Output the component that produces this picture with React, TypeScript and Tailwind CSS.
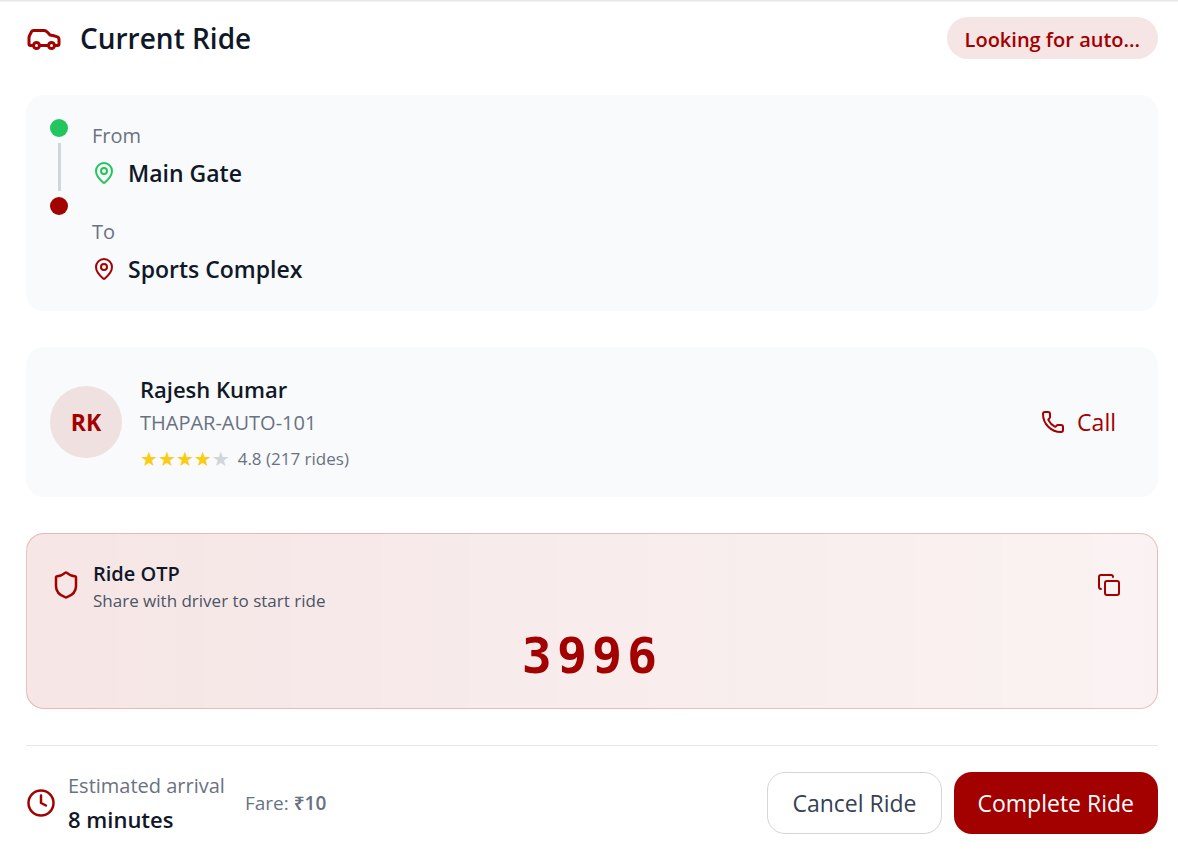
import { Car, Clock, Copy, MapPin, Phone, Shield } from "lucide-react"
import clsx from "clsx"

const ride = {
    status: "Looking for auto...",
    from: "Main Gate",
    to: "Sports Complex",
    otp: "3996",
    eta: "8 minutes",
    fare: 10,
    driver: {
        name: "Rajesh Kumar",
        initials: "RK",
        vehicle: "THAPAR-AUTO-101",
        rating: 4.8,
        rides: 217,
    },
}

function Stop({ label, place, color }: { label: string; place: string; color: string }) {
    return (
        <div>
            <p className="text-[20px] leading-[34px] text-gray-500">{label}</p>
            <div className="mt-0.5 flex items-center gap-3">
                <MapPin className={clsx("h-6 w-6", color)} />
                <span className="text-[23px] leading-[36px] font-semibold text-gray-900">{place}</span>
            </div>
        </div>
    )
}

function Stars({ rating }: { rating: number }) {
    return (
        <div className="flex font-['DejaVu_Sans',sans-serif] text-[20px] leading-[28px]">
            {[1, 2, 3, 4, 5].map((n) => (
                <span key={n} className={n <= Math.floor(rating) ? "text-[#facc15]" : "text-gray-300"}>
                    ★
                </span>
            ))}
        </div>
    )
}

export default function App() {
    const { driver } = ride

    return (
        <main className="min-h-screen border-t border-gray-200 bg-white pt-4 pr-5 pb-6 pl-[26px] font-['Open_Sans','Noto_Sans',sans-serif] inset-shadow-2xs">
            <div className="flex flex-col gap-9">
                {/* Header */}
                <header className="flex items-center justify-between">
                    <div className="flex items-center gap-[18px]">
                        <Car className="h-9 w-9 text-[#a30000]" />
                        <h1 className="text-[28px] leading-[42px] font-semibold text-gray-900">Current Ride</h1>
                    </div>
                    <span className="rounded-full bg-[#a30000]/10 px-[18px] pt-2 pb-1 text-[20px] leading-[30px] font-semibold text-[#a30000]">
                        {ride.status}
                    </span>
                </header>

                {/* Route */}
                <section className="flex gap-6 rounded-[18px] bg-[#f9fafb] p-6">
                    <div className="flex flex-col items-center gap-1.5">
                        <div className="h-[18px] w-[18px] rounded-full bg-[#22c55e]" />
                        <div className="h-12 w-[3px] bg-gray-300" />
                        <div className="h-[18px] w-[18px] rounded-full bg-[#a30000]" />
                    </div>
                    <div className="flex flex-col gap-6">
                        <Stop label="From" place={ride.from} color="text-[#22c55e]" />
                        <Stop label="To" place={ride.to} color="text-[#a30000]" />
                    </div>
                </section>

                {/* Driver */}
                <section className="flex items-center justify-between rounded-[18px] bg-[#f9fafb] p-6">
                    <div className="flex items-center gap-[18px]">
                        <div className="flex h-[72px] w-[72px] items-center justify-center rounded-full bg-[#a30000]/10 text-[23px] font-bold text-[#a30000]">
                            {driver.initials}
                        </div>
                        <div>
                            <h2 className="text-[22px] leading-[36px] font-semibold text-gray-900">{driver.name}</h2>
                            <p className="text-[20px] leading-[32px] text-gray-500">{driver.vehicle}</p>
                            <div className="mt-1.5 flex items-center gap-2">
                                <Stars rating={driver.rating} />
                                <span className="text-[17px] leading-[28px] text-gray-500">
                                    {driver.rating} ({driver.rides} rides)
                                </span>
                            </div>
                        </div>
                    </div>
                    <button className="flex items-center gap-3 rounded-xl px-[18px] py-3 text-[23px] leading-[36px] text-[#a30000] hover:bg-[#a30000]/10">
                        <Phone className="h-6 w-6" />
                        Call
                    </button>
                </section>

                {/* OTP */}
                <section className="rounded-[18px] border border-[#a30000]/20 bg-linear-to-r from-[#a30000]/10 to-[#a30000]/5 p-6">
                    <div className="flex items-center justify-between">
                        <div className="flex items-center gap-3">
                            <Shield className="h-[30px] w-[30px] text-[#a30000]" />
                            <div>
                                <h2 className="text-[20px] leading-[32px] font-semibold text-gray-900">Ride OTP</h2>
                                <p className="text-[17px] leading-[22px] text-gray-600">Share with driver to start ride</p>
                            </div>
                        </div>
                        <button aria-label="Copy OTP" className="rounded-xl p-3 text-[#a30000] hover:bg-[#a30000]/10">
                            <Copy className="h-6 w-6" />
                        </button>
                    </div>
                    <p className="mt-4 text-center font-['DejaVu_Sans_Mono',monospace] text-[50px] leading-[56px] font-bold tracking-widest text-[#a30000]">
                        {ride.otp}
                    </p>
                </section>

                {/* Footer */}
                <footer className="flex items-center justify-between border-t border-gray-200 pt-6">
                    <div className="flex items-center gap-5">
                        <div className="flex items-center gap-3">
                            <Clock className="h-[30px] w-[30px] text-[#a30000]" />
                            <div>
                                <p className="text-[20px] leading-[32px] text-gray-500">Estimated arrival</p>
                                <p className="text-[22px] leading-[34px] font-semibold text-gray-900">{ride.eta}</p>
                            </div>
                        </div>
                        <p className="text-[19px] leading-[32px] text-gray-500">
                            Fare: <span className="font-semibold">₹{ride.fare}</span>
                        </p>
                    </div>
                    <div className="flex gap-3">
                        <button className="rounded-[18px] border border-gray-300 px-6 py-3 text-[23px] leading-[36px] text-gray-700 hover:bg-gray-50">
                            Cancel Ride
                        </button>
                        <button className="rounded-[18px] bg-[#a30000] px-6 py-3 text-[23px] leading-[36px] text-white hover:bg-[#8a0000]">
                            Complete Ride
                        </button>
                    </div>
                </footer>
            </div>
        </main>
    )
}
